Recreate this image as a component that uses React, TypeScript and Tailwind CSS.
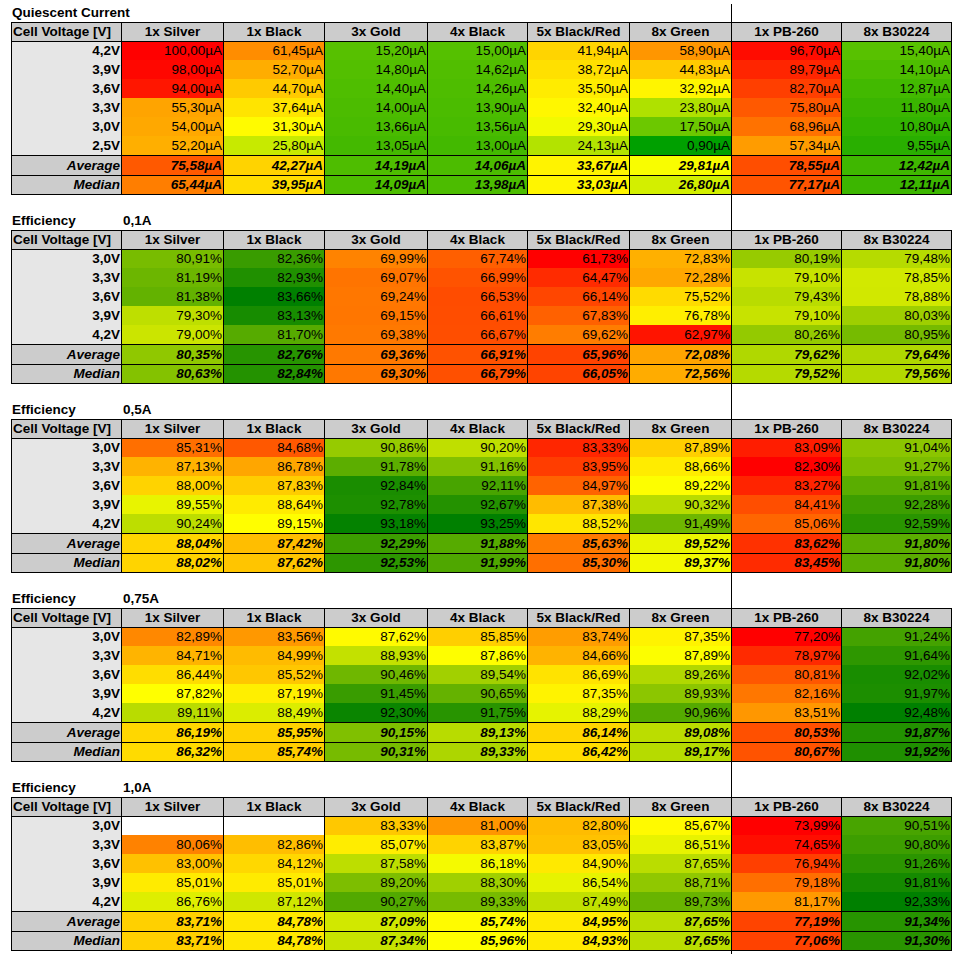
import React from "react";

type RGB = [number, number, number];

type TableDef = {
  title: string;
  sub: string;
  unit: string;
  labels: string[];
  rows: string[][];
  avg: string[];
  med: string[];
  reverse: boolean;
  green: RGB;
  gamma: number;
};

const HEADERS = ["1x Silver", "1x Black", "3x Gold", "4x Black", "5x Black/Red", "8x Green", "1x PB-260", "8x B30224"];
const EFF_LABELS = ["3,0V", "3,3V", "3,6V", "3,9V", "4,2V"];
const GRID = "grid grid-cols-[110px_102px_101px_103px_100px_102px_102px_110px_111px]";

const TABLES: TableDef[] = [
  {
    title: "Quiescent Current",
    sub: "",
    unit: "µA",
    labels: ["4,2V", "3,9V", "3,6V", "3,3V", "3,0V", "2,5V"],
    rows: [
      ["100,00", "61,45", "15,20", "15,00", "41,94", "58,90", "96,70", "15,40"],
      ["98,00", "52,70", "14,80", "14,62", "38,72", "44,83", "89,79", "14,10"],
      ["94,00", "44,70", "14,40", "14,26", "35,50", "32,92", "82,70", "12,87"],
      ["55,30", "37,64", "14,00", "13,90", "32,40", "23,80", "75,80", "11,80"],
      ["54,00", "31,30", "13,66", "13,56", "29,30", "17,50", "68,96", "10,80"],
      ["52,20", "25,80", "13,05", "13,00", "24,13", "0,90", "57,34", "9,55"],
    ],
    avg: ["75,58", "42,27", "14,19", "14,06", "33,67", "29,81", "78,55", "12,42"],
    med: ["65,44", "39,95", "14,09", "13,98", "33,03", "26,80", "77,17", "12,11"],
    reverse: true,
    green: [0, 160, 0],
    gamma: 1.5,
  },
  {
    title: "Efficiency",
    sub: "0,1A",
    unit: "%",
    labels: EFF_LABELS,
    rows: [
      ["80,91", "82,36", "69,99", "67,74", "61,73", "72,83", "80,19", "79,48"],
      ["81,19", "82,93", "69,07", "66,99", "64,47", "72,28", "79,10", "78,85"],
      ["81,38", "83,66", "69,24", "66,53", "66,14", "75,52", "79,43", "78,88"],
      ["79,30", "83,13", "69,15", "66,61", "67,83", "76,78", "79,10", "80,03"],
      ["79,00", "81,70", "69,38", "66,67", "69,62", "62,97", "80,26", "80,95"],
    ],
    avg: ["80,35", "82,76", "69,36", "66,91", "65,96", "72,08", "79,62", "79,64"],
    med: ["80,63", "82,84", "69,30", "66,79", "66,05", "72,56", "79,52", "79,56"],
    reverse: false,
    green: [0, 128, 0],
    gamma: 1,
  },
  {
    title: "Efficiency",
    sub: "0,5A",
    unit: "%",
    labels: EFF_LABELS,
    rows: [
      ["85,31", "84,68", "90,86", "90,20", "83,33", "87,89", "83,09", "91,04"],
      ["87,13", "86,78", "91,78", "91,16", "83,95", "88,66", "82,30", "91,27"],
      ["88,00", "87,83", "92,84", "92,11", "84,97", "89,22", "83,27", "91,81"],
      ["89,55", "88,64", "92,78", "92,67", "87,38", "90,32", "84,41", "92,28"],
      ["90,24", "89,15", "93,18", "93,25", "88,52", "91,49", "85,06", "92,59"],
    ],
    avg: ["88,04", "87,42", "92,29", "91,88", "85,63", "89,52", "83,62", "91,80"],
    med: ["88,02", "87,62", "92,53", "91,99", "85,30", "89,37", "83,45", "91,80"],
    reverse: false,
    green: [0, 128, 0],
    gamma: 1,
  },
  {
    title: "Efficiency",
    sub: "0,75A",
    unit: "%",
    labels: EFF_LABELS,
    rows: [
      ["82,89", "83,56", "87,62", "85,85", "83,74", "87,35", "77,20", "91,24"],
      ["84,71", "84,99", "88,93", "87,86", "84,66", "87,89", "78,97", "91,64"],
      ["86,44", "85,52", "90,46", "89,54", "86,69", "89,26", "80,81", "92,02"],
      ["87,82", "87,19", "91,45", "90,65", "87,35", "89,93", "82,16", "91,97"],
      ["89,11", "88,49", "92,30", "91,75", "88,29", "90,96", "83,51", "92,48"],
    ],
    avg: ["86,19", "85,95", "90,15", "89,13", "86,14", "89,08", "80,53", "91,87"],
    med: ["86,32", "85,74", "90,31", "89,33", "86,42", "89,17", "80,67", "91,92"],
    reverse: false,
    green: [0, 128, 0],
    gamma: 1,
  },
  {
    title: "Efficiency",
    sub: "1,0A",
    unit: "%",
    labels: EFF_LABELS,
    rows: [
      ["", "", "83,33", "81,00", "82,80", "85,67", "73,99", "90,51"],
      ["80,06", "82,86", "85,07", "83,87", "83,05", "86,51", "74,65", "90,80"],
      ["83,00", "84,12", "87,58", "86,18", "84,90", "87,65", "76,94", "91,26"],
      ["85,01", "85,01", "89,20", "88,30", "86,54", "88,71", "79,18", "91,81"],
      ["86,76", "87,12", "90,27", "89,33", "87,49", "89,73", "81,17", "92,33"],
    ],
    avg: ["83,71", "84,78", "87,09", "85,74", "84,95", "87,65", "77,19", "91,34"],
    med: ["83,71", "84,78", "87,34", "85,96", "84,93", "87,65", "77,06", "91,30"],
    reverse: false,
    green: [0, 128, 0],
    gamma: 1,
  },
];

function parse(s: string) {
  return parseFloat(s.replace(",", "."));
}

function clamp(t: number) {
  return Math.max(0, Math.min(1, t));
}

function lerp(a: RGB, b: RGB, t: number): RGB {
  return [0, 1, 2].map((i) => Math.round(a[i] + (b[i] - a[i]) * t)) as RGB;
}

function makeScale(values: number[], reverse: boolean, green: RGB, gamma: number) {
  const s = [...values].sort((a, b) => a - b);
  const n = s.length;
  const mid = n % 2 ? s[(n - 1) / 2] : (s[n / 2 - 1] + s[n / 2]) / 2;
  const min = s[0];
  const max = s[n - 1];
  const red: RGB = [255, 0, 0];
  const yellow: RGB = [255, 255, 0];
  return (v: number) => {
    let c: RGB;
    if (reverse) {
      if (v <= mid) {
        const t = Math.pow(clamp((v - min) / (mid - min)), gamma);
        c = lerp(green, yellow, t);
      } else {
        c = lerp(yellow, red, clamp((v - mid) / (max - mid)));
      }
    } else {
      if (v <= mid) {
        c = lerp(red, yellow, clamp((v - min) / (mid - min)));
      } else {
        const t = 1 - Math.pow(1 - clamp((v - mid) / (max - mid)), gamma);
        c = lerp(yellow, green, t);
      }
    }
    return `rgb(${c[0]},${c[1]},${c[2]})`;
  };
}

function TitleRow({ title, sub }: { title: string; sub: string }) {
  return (
    <div className={GRID + " h-[19px] font-bold"}>
      <div className="flex items-center whitespace-nowrap pl-px">{title}</div>
      <div className="flex items-center whitespace-nowrap pl-[2px]">{sub}</div>
    </div>
  );
}

function DataTable({ t }: { t: TableDef }) {
  const values = t.rows.flat().filter((s) => s !== "").map(parse);
  const color = makeScale(values, t.reverse, t.green, t.gamma);
  const cellBg = (s: string) => (s === "" ? "#ffffff" : color(parse(s)));

  return (
    <div>
      <TitleRow title={t.title} sub={t.sub} />
      <div className={GRID}>
        <div className="flex h-[19px] items-center border-l border-t border-black bg-[#cccccc] pl-px font-bold whitespace-nowrap">
          Cell Voltage [V]
        </div>
        {HEADERS.map((h, i) => (
          <div
            key={h}
            className={
              i === HEADERS.length - 1
                ? "flex h-[19px] items-center justify-center border-l border-r border-t border-black bg-[#cccccc] font-bold whitespace-nowrap"
                : "flex h-[19px] items-center justify-center border-l border-t border-black bg-[#cccccc] font-bold whitespace-nowrap"
            }
          >
            {h}
          </div>
        ))}
      </div>
      {t.rows.map((row, ri) => (
        <div key={ri} className={GRID}>
          <div
            className={
              ri === 0
                ? "flex h-[19px] items-center justify-end border-l border-t border-black bg-[#e6e6e6] pr-px font-bold"
                : "flex h-[19px] items-center justify-end border-l border-black bg-[#e6e6e6] pr-px font-bold"
            }
          >
            {t.labels[ri]}
          </div>
          {row.map((v, ci) => (
            <div
              key={ci}
              style={{ backgroundColor: cellBg(v) }}
              className={
                (ri === 0 ? "border-t " : "") +
                (ci === row.length - 1 ? "border-r " : "") +
                "flex h-[19px] items-center justify-end border-l border-black pr-px whitespace-nowrap"
              }
            >
              {v === "" ? "" : v + t.unit}
            </div>
          ))}
        </div>
      ))}
      <div className={GRID}>
        <div className="flex h-[20px] items-center justify-end border-l border-t border-black bg-[#cccccc] pr-px font-bold italic">
          Average
        </div>
        {t.avg.map((v, ci) => (
          <div
            key={ci}
            style={{ backgroundColor: cellBg(v) }}
            className={
              ci === t.avg.length - 1
                ? "flex h-[20px] items-center justify-end border-l border-r border-t border-black pr-px font-bold italic whitespace-nowrap"
                : "flex h-[20px] items-center justify-end border-l border-t border-black pr-px font-bold italic whitespace-nowrap"
            }
          >
            {v + t.unit}
          </div>
        ))}
      </div>
      <div className={GRID}>
        <div className="flex h-[20px] items-center justify-end border-l border-t border-b border-black bg-[#cccccc] pr-px font-bold italic">
          Median
        </div>
        {t.med.map((v, ci) => (
          <div
            key={ci}
            style={{ backgroundColor: cellBg(v) }}
            className={
              ci === t.med.length - 1
                ? "flex h-[20px] items-center justify-end border-l border-r border-t border-b border-black pr-px font-bold italic whitespace-nowrap"
                : "flex h-[20px] items-center justify-end border-l border-t border-b border-black pr-px font-bold italic whitespace-nowrap"
            }
          >
            {v + t.unit}
          </div>
        ))}
      </div>
    </div>
  );
}

export default function App() {
  return (
    <div className="relative min-h-[971px] w-[967px] bg-white pl-[11px] pt-[3px] font-['Liberation_Sans',Arial,sans-serif] text-[13.5px] leading-none text-black">
      <div className="flex flex-col gap-[16px]">
        {TABLES.map((t, i) => (
          <DataTable key={i} t={t} />
        ))}
      </div>
      <div className="absolute left-[731px] top-[4px] h-[950px] w-px bg-black" />
    </div>
  );
}
